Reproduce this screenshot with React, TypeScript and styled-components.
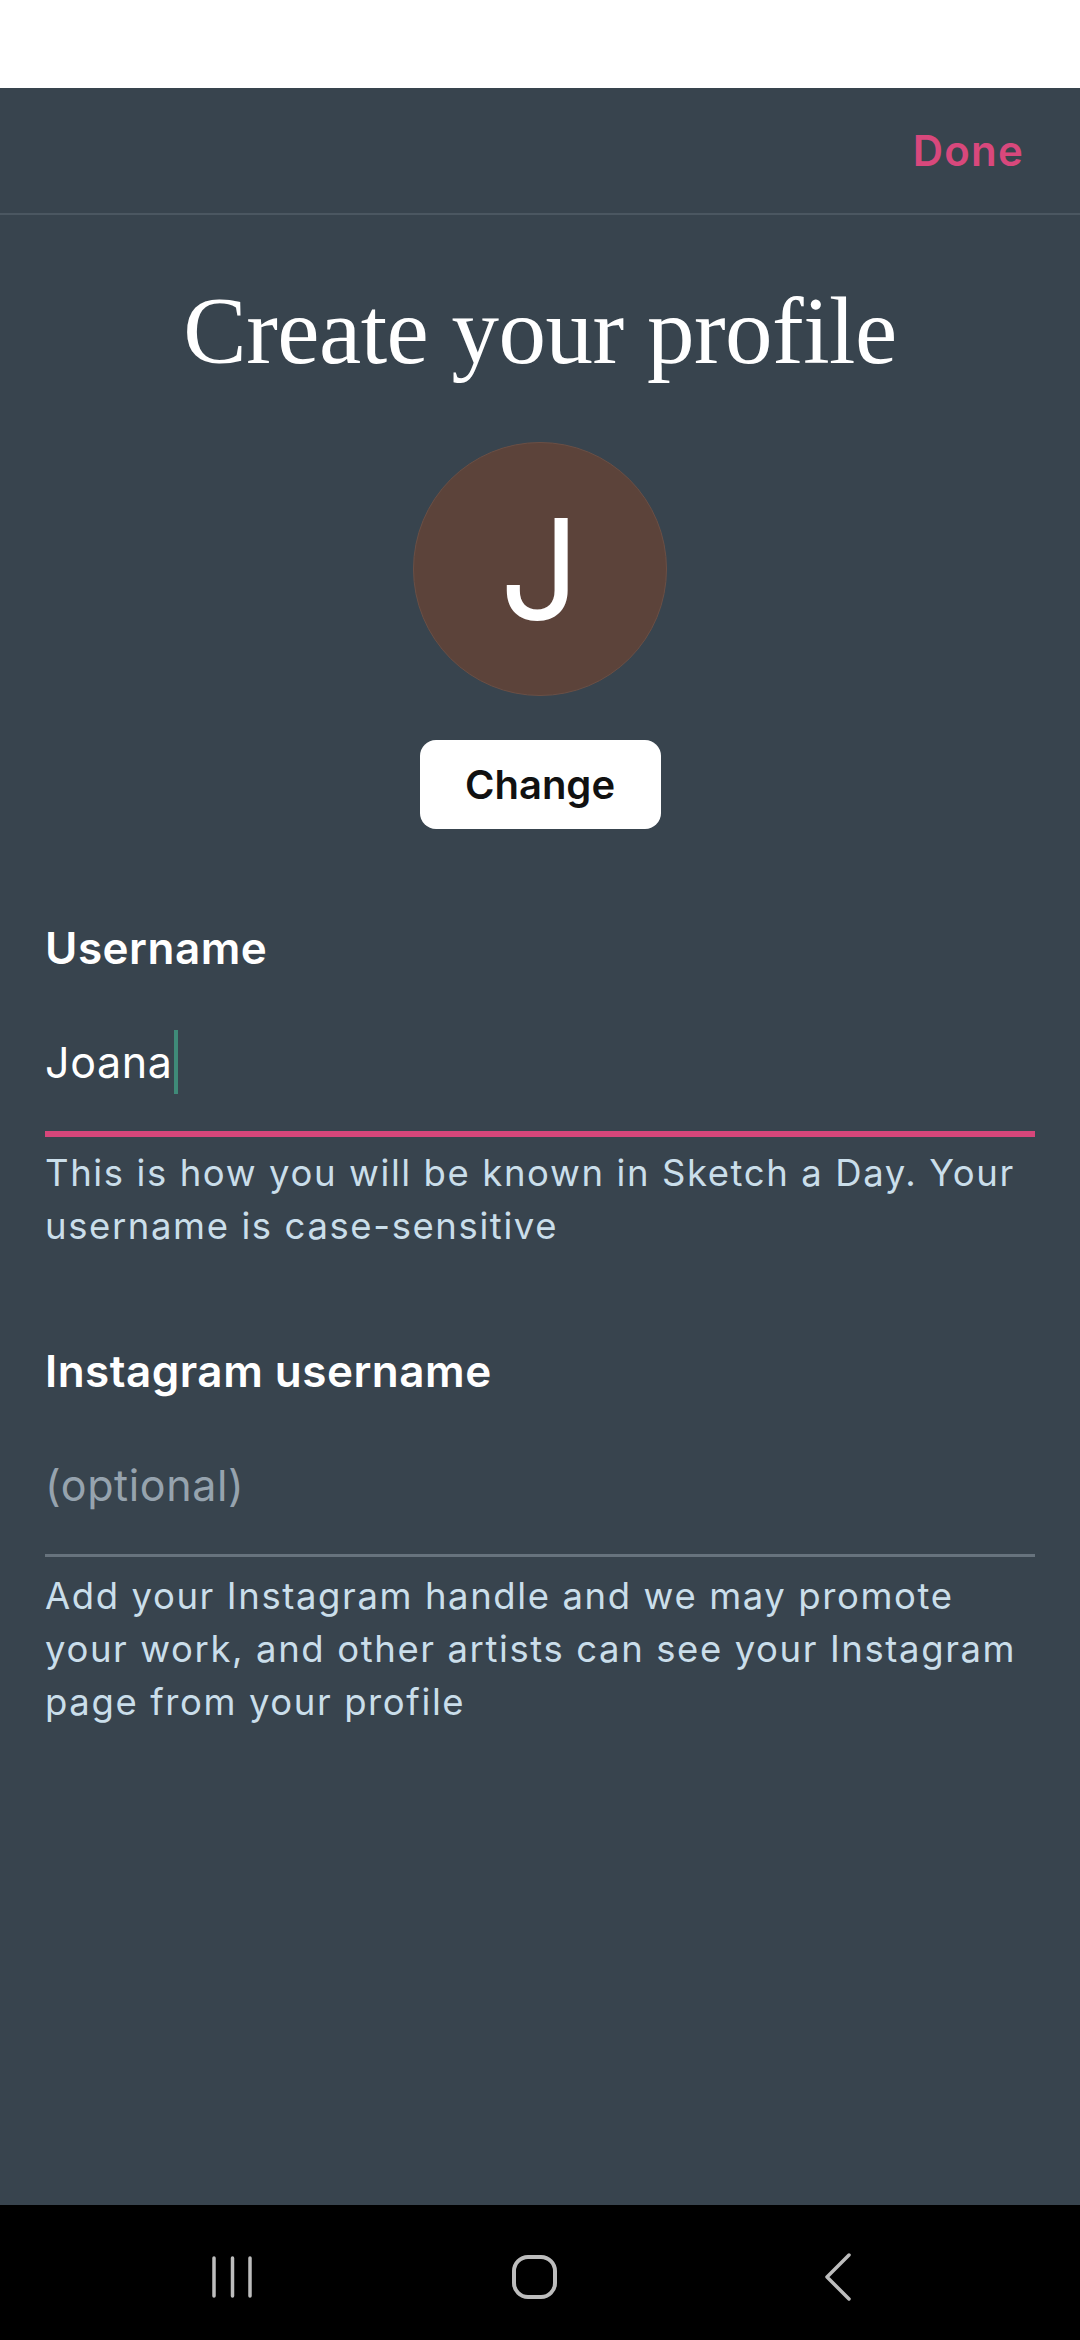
import React from 'react'
import styled, { createGlobalStyle } from 'styled-components'

const GlobalStyle = createGlobalStyle`
  html, body {
    margin: 0;
    padding: 0;
    background: #38444e;
  }
  body {
    font-family: Inter, "Noto Sans", sans-serif;
    -webkit-font-smoothing: antialiased;
  }
  * {
    box-sizing: border-box;
  }
`

const Screen = styled.div`
  display: flex;
  flex-direction: column;
  width: 1080px;
  min-height: 2340px;
  background: #38444e;
`

const StatusBar = styled.div`
  height: 88px;
  background: #ffffff;
`

const TopBar = styled.header`
  height: 127px;
  display: flex;
  align-items: center;
  justify-content: flex-end;
  padding-right: 56px;
  border-bottom: 2px solid #4b5761;
`

const DoneButton = styled.button`
  border: none;
  background: none;
  padding: 0;
  font-family: Inter, sans-serif;
  font-size: 42px;
  font-weight: 600;
  line-height: 1;
  letter-spacing: 1.2px;
  color: #d8487c;
`

const Content = styled.main`
  flex: 1;
  display: flex;
  flex-direction: column;
  padding: 0 45px;
`

const Title = styled.h1`
  margin: 61px 0 0;
  text-align: center;
  font-family: "Liberation Serif", "Times New Roman", serif;
  font-size: 95px;
  font-weight: 400;
  line-height: 110px;
  letter-spacing: -0.5px;
  color: #ffffff;
`

const Avatar = styled.div`
  width: 254px;
  height: 254px;
  margin: 56px auto 0;
  border-radius: 50%;
  border: 1px solid #6a4f45;
  background: #5c433a;
  display: flex;
  align-items: center;
  justify-content: center;
  font-size: 140px;
  font-weight: 400;
  line-height: 1;
  color: #ffffff;
`

const ChangeButton = styled.button`
  width: 241px;
  height: 89px;
  margin: 44px auto 0;
  border: none;
  border-radius: 16px;
  background: #ffffff;
  font-family: Inter, sans-serif;
  font-size: 40px;
  font-weight: 600;
  color: #111111;
`

const FieldGroup = styled.section<{ $gap: number }>`
  margin-top: ${p => p.$gap}px;
  display: flex;
  flex-direction: column;
`

const Label = styled.label`
  font-size: 44px;
  font-weight: 600;
  line-height: 50px;
  letter-spacing: 0.5px;
  color: #ffffff;
`

const Value = styled.div<{ $focused?: boolean; $placeholder?: boolean }>`
  margin-top: 57px;
  padding-bottom: 37px;
  font-size: 43px;
  line-height: 64px;
  letter-spacing: 0.6px;
  color: ${p => (p.$placeholder ? '#96a3ae' : '#ffffff')};
  border-bottom: ${p => (p.$focused ? '6px solid #d6467a' : '3px solid #67737d')};
  display: flex;
  align-items: flex-start;
`

const Caret = styled.span`
  display: inline-block;
  width: 4px;
  height: 64px;
  margin-left: 2px;
  background: #3f8a78;
`

const Helper = styled.p<{ $offset: number }>`
  margin: ${p => p.$offset}px 0 0;
  font-size: 36.5px;
  line-height: 53px;
  letter-spacing: 1.6px;
  color: #cadeea;
`

const NavBar = styled.nav`
  height: 135px;
  background: #000000;
  display: flex;
  align-items: center;
  justify-content: center;
  gap: 203px;
  padding: 9px 10px 0 0;
`

const NavSlot = styled.div`
  width: 100px;
  height: 60px;
  display: flex;
  align-items: center;
  justify-content: center;
`

const navStroke = '#bdbdbd'

const RecentsIcon = () => (
  <svg width="42" height="44" viewBox="0 0 42 44" fill="none">
    <path d="M3 3v38M21.5 3v38M39 3v38" stroke={navStroke} strokeWidth="3.5" strokeLinecap="round" />
  </svg>
)

const HomeIcon = () => (
  <svg width="48" height="46" viewBox="0 0 48 46" fill="none">
    <rect x="3" y="3" width="41" height="40" rx="14" stroke={navStroke} strokeWidth="4" />
  </svg>
)

const BackIcon = () => (
  <svg width="30" height="50" viewBox="0 0 30 50" fill="none">
    <path d="M26 3L4 25l22 22" stroke={navStroke} strokeWidth="3.5" strokeLinecap="round" strokeLinejoin="round" />
  </svg>
)

const App = () => {
  return (
    <Screen>
      <GlobalStyle />
      <StatusBar />
      <TopBar>
        <DoneButton>Done</DoneButton>
      </TopBar>
      <Content>
        <Title>Create your profile</Title>
        <Avatar>J</Avatar>
        <ChangeButton>Change</ChangeButton>

        <FieldGroup $gap={94}>
          <Label>Username</Label>
          <Value $focused>
            Joana
            <Caret />
          </Value>
          <Helper $offset={10}>
            This is how you will be known in Sketch a Day. Your username is case-sensitive
          </Helper>
        </FieldGroup>

        <FieldGroup $gap={93}>
          <Label>Instagram username</Label>
          <Value $placeholder>(optional)</Value>
          <Helper $offset={13}>
            Add your Instagram handle and we may promote your work, and other artists can see your
            Instagram page from your profile
          </Helper>
        </FieldGroup>
      </Content>
      <NavBar>
        <NavSlot>
          <RecentsIcon />
        </NavSlot>
        <NavSlot>
          <HomeIcon />
        </NavSlot>
        <NavSlot>
          <BackIcon />
        </NavSlot>
      </NavBar>
    </Screen>
  )
}

export default App
